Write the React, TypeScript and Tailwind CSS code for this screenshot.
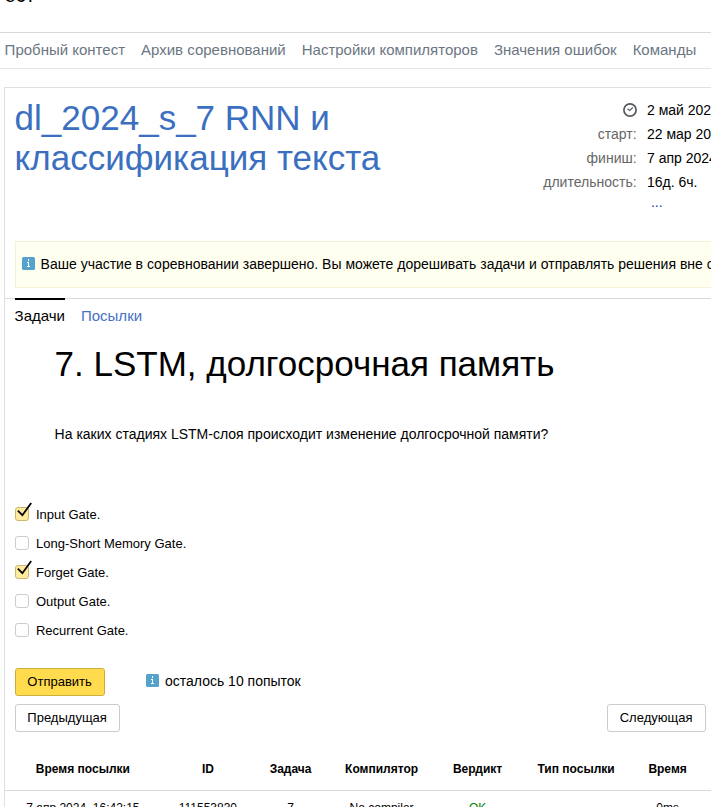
import React from 'react';

const navItems = ['Пробный контест', 'Архив соревнований', 'Настройки компиляторов', 'Значения ошибок', 'Команды'];
const options: [string, boolean][] = [
  ['Input Gate.', true],
  ['Long-Short Memory Gate.', false],
  ['Forget Gate.', true],
  ['Output Gate.', false],
  ['Recurrent Gate.', false],
];

function InfoIcon() {
  return (
    <svg className="block shrink-0" width="13" height="13" viewBox="0 0 13 13" shapeRendering="crispEdges">
      <rect width="13" height="13" rx="1.5" fill="#56a2cc" shapeRendering="auto" />
      <path d="M6 2h1v2H6zM5 5h2v4h1v1H5V9h1V6H5z" fill="#fff" />
    </svg>
  );
}

function Check({ on }: { on: boolean }) {
  return (
    <span className={on ? 'relative block h-[14px] w-[14px] rounded-[3px] border border-[#ccb86c] bg-[#ffeba0]' : 'relative block h-[14px] w-[14px] rounded-[3px] border border-[#ccc] bg-white'}>
      {on && (
        <svg className="absolute -top-[6px] left-0" width="18" height="16" viewBox="0 0 18 16">
          <path d="M1.8 8.6 6.4 13.2 15.2 1" fill="none" stroke="#000" strokeWidth="1.8" />
        </svg>
      )}
    </span>
  );
}

export default function App() {
  return (
    <div className="h-[807px] w-[711px] overflow-hidden bg-white text-sm text-black [font-family:'Liberation_Sans',Arial,sans-serif]">
      <header className="h-[33px] overflow-hidden border-b border-[#d9d9d9]">
        <div className="-mt-[17px] ml-[4.6px] text-[20px] leading-6">ест</div>
      </header>
      <nav className="flex h-9 gap-4 border-b border-[#e5e5e5] pl-[4.6px] text-[15px] leading-[34px] whitespace-nowrap text-[#6b7683]">
        {navItems.map((t) => <a key={t}>{t}</a>)}
      </nav>
      <main className="mt-[18px] ml-[3.6px] h-[730px] w-[800px] border-t border-l border-[#e0e0e0]">
        <div className="flex h-[153px] pl-[10px]">
          <h1 className="w-[450px] pt-[10px] text-[35px] leading-10 text-[#3b6fbf]">dl_2024_s_7 RNN и<br />классификация текста</h1>
          <div className="w-[172px] pt-[10px] text-right leading-6 text-[#666]">
            <div className="flex h-6 items-center justify-end">
              <svg width="14" height="14" viewBox="0 0 14 14" fill="none" stroke="#55585c">
                <circle cx="7" cy="7" r="6.1" strokeWidth="1.7" />
                <path d="m4.5 5.8 2.3 1.7 3-3" strokeWidth="1.1" />
              </svg>
            </div>
            <div>старт:</div><div>финиш:</div><div>длительность:</div>
          </div>
          <div className="pt-[10px] pl-[10.4px] leading-6 whitespace-nowrap">
            <div>2 май 2024</div><div>22 мар 2024</div><div>7 апр 2024</div><div>16д. 6ч.</div>
            <div className="-mt-1 pl-1 text-[#1a3dc1]">...</div>
          </div>
        </div>
        <div className="ml-[10px] flex h-[47px] items-center border border-[#f6f1d5] bg-[#fffff0] pb-[2px] pl-[6px] whitespace-nowrap">
          <InfoIcon />
          <span className="ml-[6px]">Ваше участие в соревновании завершено. Вы можете дорешивать задачи и отправлять решения вне соревнования</span>
        </div>
        <div className="mt-[10px] flex h-9 gap-4 border-t border-[#d9d9d9] pl-[10px] text-[15px]">
          <div className="-mt-px border-t-2 border-black leading-[32px]">Задачи</div>
          <div className="leading-[34px] text-[#4472c4]">Посылки</div>
        </div>
        <h2 className="mt-[10px] ml-[50px] text-[35px] leading-10">7. LSTM, долгосрочная память</h2>
        <p className="mt-[40px] ml-[50px] leading-5">На каких стадиях LSTM-слоя происходит изменение долгосрочной памяти?</p>
        <div className="mt-[56px] ml-[10px] text-[13px]">
          {options.map(([t, on]) => (
            <label key={t} className="flex h-[29px] items-start gap-[7.4px] pt-[7px]"><Check on={on} /><span className="leading-[15px]">{t}</span></label>
          ))}
        </div>
        <div className="mt-[23px] ml-[10px] flex items-center">
          <button className="h-7 w-[90px] rounded-[3px] border border-[#ccae3d] bg-[#ffdb4d] text-[13px]">Отправить</button>
          <div className="ml-[41px] flex items-center gap-[6.4px] pb-[3px]"><InfoIcon /><span>осталось 10 попыток</span></div>
        </div>
        <div className="mt-2 ml-[10px] flex w-[691px] justify-between text-[13px]">
          <button className="h-7 w-[105px] rounded-[3px] border border-[#ccc]">Предыдущая</button>
          <button className="h-7 w-[99px] rounded-[3px] border border-[#ccc]">Следующая</button>
        </div>
        <table className="mt-4 w-[798px] table-fixed border-collapse text-center text-[12px] whitespace-nowrap">
          <colgroup>
            <col className="w-[156.6px]" /><col className="w-[93.4px]" /><col className="w-[72px]" /><col className="w-[110px]" /><col className="w-[82px]" /><col className="w-[115px]" /><col className="w-[68px]" /><col className="w-[101px]" />
          </colgroup>
          <thead>
            <tr className="h-[42px] border-b border-[#d9d9d9] font-bold">
              {['Время посылки', 'ID', 'Задача', 'Компилятор', 'Вердикт', 'Тип посылки', 'Время'].map((t) => <th key={t} className="p-0 pt-px">{t}</th>)}
              <th className="p-0" />
            </tr>
          </thead>
          <tbody>
            <tr className="h-9">
              <td className="p-0">7 апр 2024, 16:42:15</td><td className="p-0">111553830</td><td className="p-0">7</td><td className="p-0">No compiler</td><td className="p-0 text-[#008000]">OK</td><td className="p-0" /><td className="p-0">0ms</td><td className="p-0" />
            </tr>
          </tbody>
        </table>
      </main>
    </div>
  );
}
